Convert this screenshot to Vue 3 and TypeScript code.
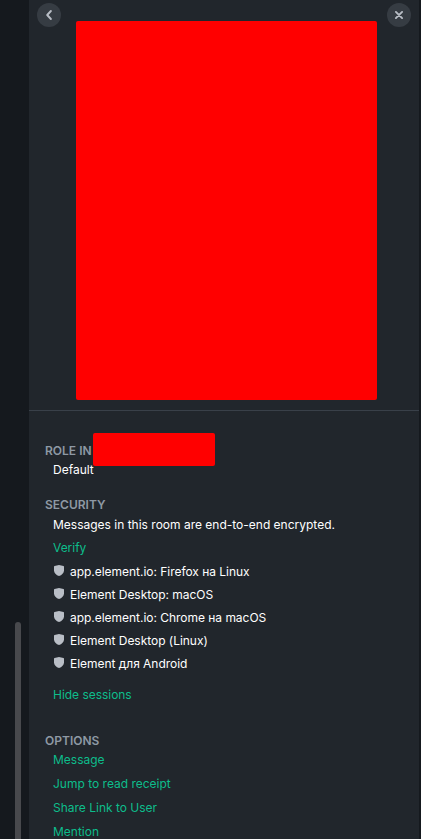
<script setup lang="ts">
const devices: string[] = [
  'app.element.io: Firefox на Linux',
  'Element Desktop: macOS',
  'app.element.io: Chrome на macOS',
  'Element Desktop (Linux)',
  'Element для Android',
]
const options: string[] = ['Message', 'Jump to read receipt', 'Share Link to User', 'Mention']
</script>

<template>
  <div class="screen">
    <div class="timeline"><div class="thumb"></div></div>
    <aside class="panel">
      <header class="profile">
        <button class="round" aria-label="Back">
          <svg width="24" height="24" viewBox="0 0 24 24"><path d="M13.9 8 10.2 12l3.7 4" /></svg>
        </button>
        <div class="avatar"></div>
        <button class="round" aria-label="Close">
          <svg width="24" height="24" viewBox="0 0 24 24"><path d="m8.9 8.9 6.2 6.2M15.1 8.9l-6.2 6.2" /></svg>
        </button>
      </header>
      <section class="role">
        <div class="role-head"><h3>ROLE IN</h3><span class="room"></span></div>
        <p>Default</p>
      </section>
      <section class="security">
        <h3>SECURITY</h3>
        <p class="notice">Messages in this room are end-to-end encrypted.</p>
        <a class="verify">Verify</a>
        <ul class="devices">
          <li v-for="device in devices" :key="device">
            <svg class="shield" width="10" height="12" viewBox="0 0 10 12">
              <path d="M5 0 9.5 1Q10 1.2 10 1.8V5.4C10 8 7.9 9.9 5 11 2.1 9.9 0 8 0 5.4V1.8Q0 1.2.5 1Z" />
            </svg>
            <span>{{ device }}</span>
          </li>
        </ul>
        <a class="sessions">Hide sessions</a>
      </section>
      <section class="options">
        <h3>OPTIONS</h3>
        <a v-for="option in options" :key="option">{{ option }}</a>
      </section>
    </aside>
  </div>
</template>

<style>
body {
  overflow: hidden;
}
</style>

<style scoped>
.screen {
  display: flex;
  box-sizing: border-box;
  width: 421px;
  height: 839px;
  padding-right: 2px;
  overflow: hidden;
  background: #15191e;
  color: #fff;
  font: 12px/20px Inter, sans-serif;
}
.timeline {
  flex: 0 0 29px;
  box-sizing: border-box;
  padding: 622px 8px 0 15px;
}
.thumb {
  height: 230px;
  border-radius: 3px;
  background: #48494d;
}
.panel {
  flex: 1;
  background: #21262c;
}
.profile {
  display: flex;
  justify-content: space-between;
  box-sizing: border-box;
  height: 411px;
  padding: 3px 8px 0;
  border-bottom: 1px solid #394049;
}
.round {
  width: 24px;
  height: 24px;
  padding: 0;
  border: 0;
  border-radius: 50%;
  background: #363c43;
}
.round svg {
  display: block;
  fill: none;
  stroke: #b9bec6;
  stroke-width: 1.9;
  stroke-linecap: round;
  stroke-linejoin: round;
}
.avatar {
  width: 301px;
  height: 379px;
  margin: 18px auto 0 15px;
  border-radius: 2px;
  background: #f00;
}
h3,
p,
ul {
  margin: 0;
  padding: 0;
}
h3 {
  height: 20px;
  color: #8e99a4;
  font-size: 12px;
  font-weight: 600;
}
.role {
  height: 84px;
  padding: 22px 16px 0;
  box-sizing: border-box;
}
.role-head {
  display: flex;
  height: 27px;
}
.role-head h3 {
  width: 48px;
  padding-top: 8px;
  white-space: nowrap;
}
.room {
  width: 122px;
  height: 33px;
  border-radius: 2px;
  background: #f00;
}
.role p {
  position: relative;
  padding-left: 8px;
}
.security {
  height: 236px;
  padding: 0 16px;
}
.notice {
  padding-left: 8px;
}
a {
  display: block;
  padding-left: 8px;
  color: #0dbd8b;
}
.verify {
  margin-top: 3px;
}
.devices {
  margin-top: 2px;
  padding-left: 9px;
  list-style: none;
}
li {
  display: flex;
  gap: 6px;
  height: 23px;
  line-height: 23px;
  letter-spacing: -0.03px;
}
.shield {
  flex: none;
  margin-top: 4.5px;
  fill: #b9bec6;
}
.verify,
.sessions {
  letter-spacing: -0.03px;
}
.sessions {
  margin-top: 10px;
}
.options {
  padding: 0 16px;
}
.options h3 {
  height: 17px;
}
.options a {
  line-height: 24px;
}
</style>
